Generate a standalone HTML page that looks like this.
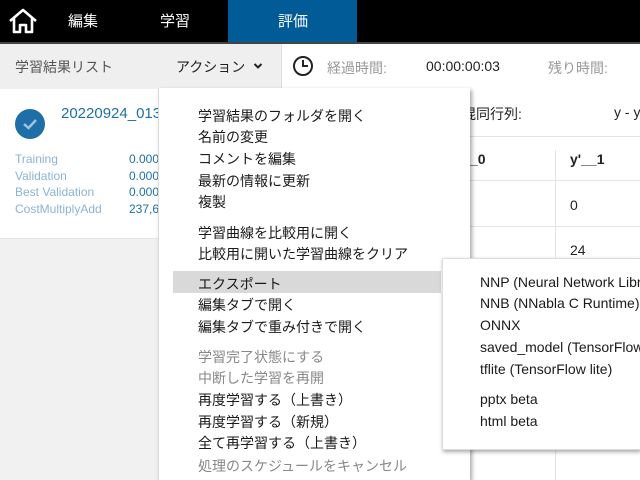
<!DOCTYPE html>
<html><head><meta charset="utf-8"><style>
*{margin:0;padding:0;box-sizing:border-box}
body{width:640px;height:480px;overflow:hidden;position:relative;background:#f1f1f1;font-family:"Liberation Sans","Noto Sans CJK JP",sans-serif;font-size:14px;color:#222}
.a{position:absolute;white-space:nowrap}
.top{left:0;top:0;width:640px;height:42px;background:#000}
.tab{color:#fff;font-size:15px;top:10px}
.m{left:198px;font-size:14px;color:#1a1a1a}
.g{color:#888}
.s{left:37px;font-size:14px;color:#1a1a1a}
</style></head><body>
<div class="a top"></div>
<svg class="a" style="left:8px;top:7px" width="30" height="28" viewBox="0 0 30 28"><path d="M2 14 L15 3 L28 14 M6 11 V25 H12 V18 H18 V25 H24 V11" fill="none" stroke="#fff" stroke-width="2.6" stroke-linejoin="round"/></svg>
<div class="a tab" style="left:68px">編集</div>
<div class="a tab" style="left:160px">学習</div>
<div class="a" style="left:228px;top:0;width:129px;height:42px;background:#005b96"></div>
<div class="a tab" style="left:278px">評価</div>
<div class="a" style="left:0;top:42px;width:640px;height:2px;background:#444"></div>
<div class="a" style="left:0;top:44px;width:280px;height:44px;background:#efefef"></div>
<div class="a" style="left:281px;top:44px;width:359px;height:45px;background:#fff;border-left:1px solid #ddd"></div>
<div class="a" style="left:15px;top:57px;color:#555;font-size:14px">学習結果リスト</div>
<div class="a" style="left:176px;top:57px;font-size:14px">アクション</div>
<svg class="a" style="left:253px;top:62px" width="10" height="8"><path d="M1.5 2 L5 5.5 L8.5 2" fill="none" stroke="#222" stroke-width="2"/></svg>
<svg class="a" style="left:292px;top:55px" width="22" height="22"><circle cx="11" cy="11" r="9" fill="none" stroke="#222" stroke-width="2"/><path d="M11 5 V11 H16" fill="none" stroke="#222" stroke-width="2"/></svg>
<div class="a" style="left:327px;top:58px;color:#999">経過時間:</div>
<div class="a" style="left:426px;top:58px">00:00:00:03</div>
<div class="a" style="left:548px;top:58px;color:#999">残り時間:</div>
<div class="a" style="left:0;top:89px;width:158px;height:150px;background:#fff;border-bottom:1px solid #e4e4e4"></div>
<div class="a" style="left:15px;top:109px;width:30px;height:30px;border-radius:50%;background:#1e6fa8"></div>
<svg class="a" style="left:15px;top:109px" width="30" height="30"><path d="M9 15 L13.5 19 L21 11" fill="none" stroke="#9cc3e0" stroke-width="2.5"/></svg>
<div class="a" style="left:61px;top:105px;color:#1e6fa8;font-size:15px">20220924_0134</div>
<div class="a" style="left:15px;top:151px;font-size:12px;line-height:16.5px;color:#8ab4d4">Training<br>Validation<br>Best Validation<br>CostMultiplyAdd</div>
<div class="a" style="left:129px;top:151px;font-size:12px;line-height:16.5px;color:#1e6fa8">0.000<br>0.000<br>0.000<br>237,6</div>
<div class="a" style="left:470px;top:89px;width:170px;height:391px;background:#fff"></div>
<div class="a" style="left:462px;top:104px">混同行列:</div>
<div class="a" style="left:614px;top:104px">y - y</div>
<div class="a" style="left:470px;top:136px;width:170px;height:1px;background:#e4e4e4"></div>
<div class="a" style="left:470px;top:180px;width:170px;height:1px;background:#e4e4e4"></div>
<div class="a" style="left:470px;top:226px;width:170px;height:1px;background:#e4e4e4"></div>
<div class="a" style="left:555px;top:150px;width:1px;height:330px;background:#e4e4e4"></div>
<div class="a" style="left:470px;top:151px;font-weight:bold">_0</div>
<div class="a" style="left:570px;top:151px;font-weight:bold">y'__1</div>
<div class="a" style="left:570px;top:197px">0</div>
<div class="a" style="left:570px;top:242px">24</div>
<div class="a" style="left:158px;top:88px;width:312px;height:392px;background:#fff;box-shadow:2px 2px 4px rgba(0,0,0,.35);border-left:1px solid #ddd"></div>
<div class="a" style="left:173px;top:271px;width:268px;height:22px;background:#d9d9d9"></div>
<div class="a m" style="top:106px">学習結果のフォルダを開く</div>
<div class="a m" style="top:127px">名前の変更</div>
<div class="a m" style="top:149px">コメントを編集</div>
<div class="a m" style="top:171px">最新の情報に更新</div>
<div class="a m" style="top:192px">複製</div>
<div class="a m" style="top:223px">学習曲線を比較用に開く</div>
<div class="a m" style="top:244px">比較用に開いた学習曲線をクリア</div>
<div class="a m" style="top:274px">エクスポート</div>
<div class="a m" style="top:295px">編集タブで開く</div>
<div class="a m" style="top:317px">編集タブで重み付きで開く</div>
<div class="a m g" style="top:347px">学習完了状態にする</div>
<div class="a m g" style="top:368px">中断した学習を再開</div>
<div class="a m" style="top:390px">再度学習する（上書き）</div>
<div class="a m" style="top:412px">再度学習する（新規）</div>
<div class="a m" style="top:433px">全て再学習する（上書き）</div>
<div class="a m g" style="top:456px">処理のスケジュールをキャンセル</div>
<div class="a" style="left:442px;top:258px;width:198px;height:192px;background:#fff;box-shadow:1px 2px 4px rgba(0,0,0,.35);border:1px solid #ddd;border-right:none;overflow:hidden">
<div class="a s" style="top:15px">NNP (Neural Network Libraries)</div>
<div class="a s" style="top:36px">NNB (NNabla C Runtime)</div>
<div class="a s" style="top:58px">ONNX</div>
<div class="a s" style="top:80px">saved_model (TensorFlow)</div>
<div class="a s" style="top:102px">tflite (TensorFlow lite)</div>
<div class="a s" style="top:132px">pptx beta</div>
<div class="a s" style="top:154px">html beta</div>
</div>
</body></html>
